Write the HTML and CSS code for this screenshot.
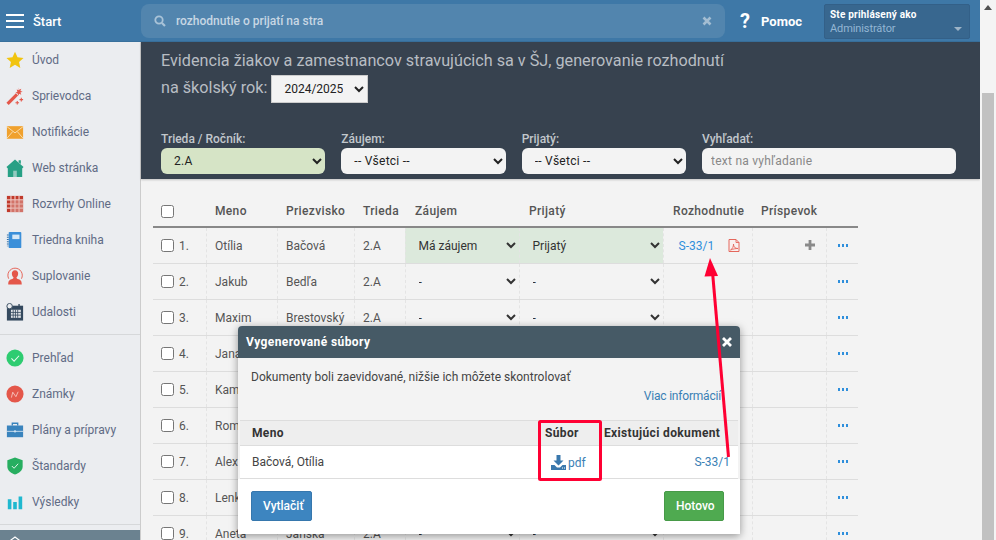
FILE: index.html
```html
<!DOCTYPE html>
<html lang="sk">
<head>
<meta charset="utf-8">
<title>Evidencia žiakov</title>
<link rel="stylesheet" href="styles.css">
</head>
<body>
<div class="page">
  <div class="app">
    <header class="topbar">
      <div class="brand">
        <svg class="burger" width="18" height="14" viewBox="0 0 18 14"><path d="M0 1h18M0 7h18M0 13h18" stroke="#fff" stroke-width="2" fill="none"/></svg>
        <span class="brand-text">Štart</span>
      </div>
      <div class="search">
        <svg class="search-icon" width="12" height="12" viewBox="0 0 12 12"><circle cx="5" cy="5" r="3.7" fill="none" stroke="#a9c3d8" stroke-width="1.8"/><path d="M8 8l3 3" stroke="#a9c3d8" stroke-width="2.2"/></svg>
        <span class="search-text">rozhodnutie o prijatí na stra</span>
        <svg class="search-clear" width="10" height="10" viewBox="0 0 10 10"><path d="M1.5 1.5l7 7M8.5 1.5l-7 7" stroke="#a3bdd2" stroke-width="2.6"/></svg>
      </div>
      <div class="help"><span class="help-mark">?</span><span class="help-text">Pomoc</span></div>
      <div class="user">
        <div class="user-top">Ste prihlásený ako</div>
        <div class="user-role"><span>Administrátor</span><i class="user-caret"></i></div>
      </div>
    </header>
    <div class="content">
      <nav class="sidebar">
        <ul class="menu">
          <li class="menu-item"><svg class="mi" viewBox="0 0 20 20"><path d="M10 .8l2.8 6.2 6.7.7-5 4.5 1.4 6.6-5.9-3.4-5.9 3.4 1.4-6.6-5-4.5 6.7-.7z" fill="#f1c40f"/></svg>Úvod</li>
          <li class="menu-item"><svg class="mi" viewBox="0 0 20 20"><path d="M.5 17.500L11 7l2.500 2.500L3 20z" fill="#e4574a"/><path d="M14 .5l.7 2.500 2.300-1-1 2.500 2.500.8-2.500.8 1 2.400-2.400-1-.8 2.300-.9-2.700-2.400-.6 2.200-1.200-.8-2.600 2.400 1z" fill="#e4574a"/><path d="M17 12v4M15 14h4M12.500 15.500v4M10.500 17.500h4" stroke="#e4574a" stroke-width="1.200"/></svg>Sprievodca</li>
          <li class="menu-item"><svg class="mi" viewBox="0 0 20 20"><path d="M1 3.500h18v14H1z" fill="#f0a12d"/><path d="M1 4l9 7 9-7M1 17l6.500-7.500M19 17l-6.500-7.500" fill="none" stroke="#fbe1b3" stroke-width="1"/></svg>Notifikácie</li>
          <li class="menu-item"><svg class="mi" viewBox="0 0 20 20"><path d="M10 .5L19.500 9 18 10.500V20H2V10.500L.5 9zM14 1.500h2.500v4L14 3.500z" fill="#27a085"/><path d="M8 13h4v7H8z" fill="#ebedf0" opacity=".55"/></svg>Web stránka</li>
          <li class="menu-item"><svg class="mi" viewBox="0 0 20 20"><rect x="1" y="1" width="18" height="18" fill="#c0392b"/><path d="M5.500 1v18M10 1v18M14.500 1v18M1 5.500h18M1 10h18M1 14.500h18" stroke="#f0c9c4" stroke-width="1.300"/><rect x="6" y="6" width="13" height="13" fill="#e0a49d" opacity=".55"/></svg>Rozvrhy Online</li>
          <li class="menu-item"><svg class="mi" viewBox="0 0 20 20"><rect x="3" y="1" width="14" height="18" rx="1" fill="#3b8fd9"/><rect x="7" y="4" width="8" height="5" fill="#d6e8f7"/><path d="M2 4v13" stroke="#2f6fa8" stroke-width="2" stroke-dasharray="1 1.500"/></svg>Triedna kniha</li>
          <li class="menu-item"><svg class="mi" viewBox="0 0 20 20"><path d="M3 13A8 8 0 1 1 17.200 13" fill="none" stroke="#e4574a" stroke-width="1"/><path d="M10 3.500c2.500 0 3.700 2 3.500 4.200-.2 2-1.200 3.300-1.900 4 0 1 .8 1.500 2.400 2 2 .7 3.500 1.500 3.500 5.800H2.500c0-4.300 1.500-5.100 3.500-5.800 1.600-.5 2.400-1 2.400-2-.7-.7-1.700-2-1.900-4C6.300 5.500 7.500 3.500 10 3.500z" fill="#e4574a"/></svg>Suplovanie</li>
          <li class="menu-item"><svg class="mi" viewBox="0 0 20 20"><rect x="1" y="3" width="18" height="16.500" fill="#34495e"/><path d="M5.500 7.500h11v9h-11z" fill="#dfe3e7"/><path d="M8 7.500v9M10.500 7.500v9M13 7.500v9M5.500 10.500h11M5.500 13.500h11" stroke="#34495e" stroke-width=".9"/><circle cx="4" cy="3.500" r="3" fill="#ebedf0" stroke="#34495e" stroke-width="1"/><path d="M14.500 1v4" stroke="#34495e" stroke-width="1.500"/></svg>Udalosti</li>
        </ul>
        <hr class="menu-rule">
        <ul class="menu">
          <li class="menu-item"><svg class="mi" viewBox="0 0 20 20"><circle cx="10" cy="10" r="9.500" fill="#2ecc71"/><path d="M6 10.500l3 3 5.500-6" fill="none" stroke="#e8f8ef" stroke-width="1.200"/></svg>Prehľad</li>
          <li class="menu-item"><svg class="mi" viewBox="0 0 20 20"><circle cx="10" cy="10" r="9.500" fill="#e4574a"/><path d="M6 14l1.500-6 3.500 5 2.500-5.500" fill="none" stroke="#f5c6c1" stroke-width="1"/></svg>Známky</li>
          <li class="menu-item"><svg class="mi" viewBox="0 0 20 20"><rect x="1" y="5" width="18" height="13" fill="#3a84bd"/><path d="M7 5V2.500h6V5" fill="none" stroke="#3a84bd" stroke-width="1.500"/><path d="M1 11.500h18" stroke="#cfe2f1" stroke-width="1"/><circle cx="10" cy="11.500" r="1.300" fill="#cfe2f1"/></svg>Plány a prípravy</li>
          <li class="menu-item"><svg class="mi" viewBox="0 0 20 20"><path d="M10 .5l8.500 3v7c0 4.500-4 7.500-8.500 9-4.500-1.500-8.500-4.500-8.500-9v-7z" fill="#27ae60"/><path d="M6.500 10l2.500 2.500 4.500-5" fill="none" stroke="#dff5e7" stroke-width="1.100"/></svg>Štandardy</li>
          <li class="menu-item"><svg class="mi" viewBox="0 0 20 20"><path d="M2 7h4v11H2zM8 10h4v8H8zM14 4h4v14h-4z" fill="#1fb8cf"/></svg>Výsledky</li>
        </ul>
        <hr class="menu-rule menu-rule-last">
        <div class="side-foot"><svg width="18" height="10" viewBox="0 0 18 10"><path d="M1 8l8-6 8 6" fill="none" stroke="#fff" stroke-width="1.200"/></svg></div>
      </nav>
      <main class="main">
        <section class="panel">
          <h1 class="panel-title">Evidencia žiakov a zamestnancov stravujúcich sa v ŠJ, generovanie rozhodnutí<br>na školský rok: <select class="year"><option>2024/2025</option></select></h1>
          <div class="filters">
            <label class="field"><span class="field-label">Trieda / Ročník:</span><select class="ctl ctl-on"><option>2.A</option></select></label>
            <label class="field"><span class="field-label">Záujem:</span><select class="ctl"><option>-- Všetci --</option></select></label>
            <label class="field"><span class="field-label">Prijatý:</span><select class="ctl"><option>-- Všetci --</option></select></label>
            <label class="field"><span class="field-label">Vyhľadať:</span><input class="ctl ctl-text" placeholder="text na vyhľadanie"></label>
          </div>
        </section>
        <table class="grid">
          <colgroup><col class="c1"><col class="c2"><col class="c3"><col class="c4"><col class="c5"><col class="c6"><col class="c7"><col class="c8"><col class="c9"></colgroup>
          <thead><tr><th><input type="checkbox" class="chk"></th><th>Meno</th><th>Priezvisko</th><th>Trieda</th><th>Záujem</th><th>Prijatý</th><th>Rozhodnutie</th><th>Príspevok</th><th></th></tr></thead>
          <tbody>
            <tr><td><input type="checkbox" class="chk"><span class="num">1.</span></td><td>Otília</td><td>Bačová</td><td>2.A</td><td class="sel on"><select><option>Má záujem</option></select></td><td class="sel on"><select><option>Prijatý</option></select></td><td class="doc"><a class="doc-link">S-33/1</a><svg class="pdf" width="12" height="13" viewBox="0 0 12 13"><path d="M1 .5h7l3 3v9H1z" fill="#f9f0ef" stroke="#e4675c"/><path d="M8 .5v3h3M2.500 11c2-1 3-3.500 3-6 0 3 1.500 4.500 4.500 4.500-2.500 0-5 .5-7.500 1.500z" fill="none" stroke="#e4675c" stroke-width=".9"/></svg></td><td class="plus"><svg width="10" height="10" viewBox="0 0 10 10"><path d="M5 0v10M0 5h10" stroke="#8a8a8a" stroke-width="2.800"/></svg></td><td class="dots"><i></i></td></tr>
            <tr><td><input type="checkbox" class="chk"><span class="num">2.</span></td><td>Jakub</td><td>Bedľa</td><td>2.A</td><td class="sel"><select><option>-</option></select></td><td class="sel"><select><option>-</option></select></td><td></td><td></td><td class="dots"><i></i></td></tr>
            <tr><td><input type="checkbox" class="chk"><span class="num">3.</span></td><td>Maxim</td><td>Brestovský</td><td>2.A</td><td class="sel"><select><option>-</option></select></td><td class="sel"><select><option>-</option></select></td><td></td><td></td><td class="dots"><i></i></td></tr>
            <tr><td><input type="checkbox" class="chk"><span class="num">4.</span></td><td>Jana</td><td>Čierna</td><td>2.A</td><td class="sel"><select><option>-</option></select></td><td class="sel"><select><option>-</option></select></td><td></td><td></td><td class="dots"><i></i></td></tr>
            <tr><td><input type="checkbox" class="chk"><span class="num">5.</span></td><td>Kamil</td><td>Dubec</td><td>2.A</td><td class="sel"><select><option>-</option></select></td><td class="sel"><select><option>-</option></select></td><td></td><td></td><td class="dots"><i></i></td></tr>
            <tr><td><input type="checkbox" class="chk"><span class="num">6.</span></td><td>Roman</td><td>Fabian</td><td>2.A</td><td class="sel"><select><option>-</option></select></td><td class="sel"><select><option>-</option></select></td><td></td><td></td><td class="dots"><i></i></td></tr>
            <tr><td><input type="checkbox" class="chk"><span class="num">7.</span></td><td>Alex</td><td>Hudec</td><td>2.A</td><td class="sel"><select><option>-</option></select></td><td class="sel"><select><option>-</option></select></td><td></td><td></td><td class="dots"><i></i></td></tr>
            <tr><td><input type="checkbox" class="chk"><span class="num">8.</span></td><td>Lenka</td><td>Horná</td><td>2.A</td><td class="sel"><select><option>-</option></select></td><td class="sel"><select><option>-</option></select></td><td></td><td></td><td class="dots"><i></i></td></tr>
            <tr><td><input type="checkbox" class="chk"><span class="num">9.</span></td><td>Aneta</td><td>Janská</td><td>2.A</td><td class="sel"><select><option>-</option></select></td><td class="sel"><select><option>-</option></select></td><td></td><td></td><td class="dots"><i></i></td></tr>
          </tbody>
        </table>
      </main>
    </div>
  </div>
  <div class="scrollbar"><i class="scroll-up"></i><div class="scroll-thumb"></div></div>

  <div class="modal">
    <div class="modal-head"><span>Vygenerované súbory</span><svg width="10" height="10" viewBox="0 0 10 10"><path d="M1 1l8 8M9 1l-8 8" stroke="#fff" stroke-width="2.800"/></svg></div>
    <div class="modal-body">
      <p class="modal-text">Dokumenty boli zaevidované, nižšie ich môžete skontrolovať</p>
      <p class="modal-more"><a>Viac informácií</a></p>
    </div>
    <table class="files">
      <colgroup><col class="f1"><col class="f2"><col class="f3"></colgroup>
      <thead><tr><th>Meno</th><th>Súbor</th><th>Existujúci dokument</th></tr></thead>
      <tbody><tr><td>Bačová, Otília</td><td class="file"><svg width="15" height="15" viewBox="0 0 15 15"><path d="M5.500 0h4v5.500H12.500L7.500 10.500 2.500 5.500h3z" fill="#3a78ad"/><path d="M0 10h3.500l2.500 2.500h3L11.500 10H15v5H0z" fill="#3a78ad"/><path d="M11 13h1M13 13h1" stroke="#fff"/></svg><a>pdf</a></td><td class="existing"><a>S-33/1</a></td></tr></tbody>
    </table>
    <div class="modal-foot"><button class="btn btn-blue">Vytlačiť</button><button class="btn btn-green">Hotovo</button></div>
  </div>

  <svg class="overlay" width="996" height="540" viewBox="0 0 996 540">
    <rect x="539.500" y="421.500" width="61" height="58" rx="1" fill="none" stroke="#ff0033" stroke-width="3"/>
    <path d="M728.500 457L712.500 272" fill="none" stroke="#ff0033" stroke-width="3"/>
    <path d="M710 258l8 18-13.500 .5z" fill="#ff0033"/>
  </svg>
</div>
</body>
</html>
```

FILE: styles.css
```css
* { box-sizing: border-box; }
html, body { margin: 0; padding: 0; height: 100%; overflow: hidden; }
body { font-family: Roboto, "Liberation Sans", sans-serif; font-size: 12px; color: #555; background: #f3f3f3; }
a { color: #3a7fb5; text-decoration: none; }

.page { position: relative; display: flex; width: 996px; height: 540px; overflow: hidden; }
.app { flex: 1; min-width: 0; display: flex; flex-direction: column; }

.topbar { flex: none; height: 42px; display: flex; align-items: center; background: #3e78a7; box-shadow: inset 0 -1px 0 #38709c; }
.brand { width: 141px; flex: none; display: flex; align-items: center; padding-left: 6px; color: #fff; }
.burger { flex: none; }
.brand-text { margin-left: 9px; font-size: 13px; font-weight: 500; }
.search { width: 584px; flex: none; height: 34px; display: flex; align-items: center; padding: 0 13px 0 13px; background: #5285ae; border-radius: 8px; }
.search-icon { flex: none; }
.search-text { flex: 1; margin-left: 10px; color: #c7d7e4; font-size: 12px; font-weight: 500; }
.search-clear { flex: none; }
.help { display: flex; align-items: center; margin-left: 15px; color: #fff; font-weight: 700; }
.help-mark { font-size: 20px; width: 21px; }
.help-text { font-size: 13px; }
.user { margin-left: 22px; width: 146px; height: 35px; padding: 4px 5px; background: #38678f; border: 1px solid #336088; border-radius: 2px; }
.user-top { color: #fff; font-size: 10px; font-weight: 700; line-height: 12px; letter-spacing: .2px; }
.user-role { display: flex; align-items: center; justify-content: space-between; color: #93b6d4; font-size: 11px; line-height: 16px; letter-spacing: -.1px; }
.user-caret { width: 0; height: 0; margin-right: 2px; border-left: 4px solid transparent; border-right: 4px solid transparent; border-top: 4px solid #9db4c7; }

.content { flex: 1; min-height: 0; display: flex; }
.sidebar { flex: none; width: 141px; display: flex; flex-direction: column; background: #ebedf0; border-right: 1px solid #ccc; }
.menu { list-style: none; margin: 0; padding: 0; }
.menu-item { height: 36px; display: flex; align-items: center; padding-left: 6px; color: #5f6b85; font-size: 12px; }
.mi { width: 18px; height: 18px; flex: none; margin-right: 8px; }
.menu-rule { width: 100%; margin: 4px 0 5px; border: 0; border-top: 1px solid #d6d8da; }
.menu-rule-last { margin-bottom: 5px; }
.side-foot { flex: 1; display: flex; justify-content: flex-start; padding: 5px 0 0 6px; background: #6b8290; }

.main { flex: 1; min-width: 0; background: #f3f3f3; }
.panel { height: 137px; padding: 5px 20px 0; background: #37424f; box-shadow: 0 1px 2px rgba(0,0,0,.2); }
.panel-title { margin: 0; height: 60px; color: #b8bdc3; font-size: 16.2px; font-weight: 400; line-height: 27px; }
.year { width: 97px; height: 28px; margin-left: 0; padding: 0 8px; background: #f3f3f3; color: #222; border: 1px solid #ccc; border-radius: 0; font: 12px Roboto, sans-serif; vertical-align: middle; }
.filters { display: grid; grid-template-columns: 1fr 1fr 1fr 254px; column-gap: 16px; margin: 25px 4px 0 0; }
.field { display: flex; flex-direction: column; }
.field-label { color: #c2c7cc; font-size: 12px; font-weight: 500; line-height: 14px; margin-bottom: 2px; }
.ctl { height: 26px; width: 100%; padding: 0 9px; background: #f3f3f3; color: #222; border: 0; border-radius: 6px; font: 12px Roboto, sans-serif; letter-spacing: .25px; }
.ctl-on { background: #d6e4c6; }
.ctl-text { color: #333; }
.ctl-text::placeholder { color: #888; }

.grid { width: 705px; margin: 14px 0 0 12px; border-collapse: collapse; table-layout: fixed; }
.c1 { width: 53px; } .c2 { width: 71px; } .c3 { width: 77px; } .c4 { width: 51px; } .c5 { width: 114px; } .c6 { width: 144px; } .c7 { width: 89px; } .c8 { width: 74px; } .c9 { width: 32px; }
.grid th { height: 34px; padding: 2px 0 0 9px; text-align: left; font-weight: 500; font-size: 12px; color: #555; letter-spacing: .35px; border-bottom: 2px solid #888; }
.grid th:nth-child(n+5):nth-child(-n+7) { padding-left: 10px; }
.grid td { height: 36px; padding: 0 0 0 8.5px; color: #555; border-bottom: 1px solid #ddd; border-left: 1px dashed #e4e4e4; white-space: nowrap; }
.grid th:first-child, .grid td:first-child { border-left: 0; padding-left: 8px; }
.chk { width: 13px; height: 13px; margin: 0; vertical-align: middle; }
.num { margin-left: 5px; vertical-align: middle; }
.grid td.sel { padding: 0; }
.grid td.on { background: #dce9dc; }
.sel select { width: 100%; height: 35px; padding: 0 0 0 9px; background: transparent; border: 0; color: #333; font: 12px Roboto, sans-serif; }
.grid td.doc { padding-left: 15px; }
.doc-link { color: #2f8fdc; }
.pdf { margin-left: 14px; vertical-align: -2px; }
.grid td.plus { text-align: right; padding-right: 11px; }
.grid td.dots { padding-left: 11px; }
.dots i { display: block; width: 10px; height: 3px; background: repeating-linear-gradient(90deg, #2f8fdc 0 2px, transparent 2px 4px); }

.scrollbar { flex: none; position: relative; width: 16px; background: #f4f4f4; }
.scroll-up { position: absolute; left: 4px; top: 5px; width: 0; height: 0; border-left: 4px solid transparent; border-right: 4px solid transparent; border-bottom: 5px solid #505050; }
.scroll-thumb { position: absolute; left: 2px; right: 2px; top: 93px; bottom: 0; background: #c1c1c1; }

.modal { position: absolute; left: 238px; top: 326px; width: 502px; height: 208px; display: flex; flex-direction: column; background: #f3f3f3; border-radius: 4px 4px 0 0; box-shadow: 0 2px 8px rgba(0,0,0,.4); overflow: hidden; }
.modal-head { flex: none; height: 32px; display: flex; align-items: center; justify-content: space-between; padding: 0 8px 0 8px; background: #465a66; color: #fff; font-weight: 700; font-size: 12px; letter-spacing: .4px; }
.modal-body { flex: none; height: 62px; padding: 0 13px; }
.modal-text { margin: 12px 0 0; color: #444; }
.modal-more { margin: 5px 6px 0 0; text-align: right; letter-spacing: -.2px; }
.files { flex: none; width: 498px; margin: 0 2px; border-collapse: collapse; table-layout: fixed; }
.f1 { width: 298px; } .f2 { width: 64px; } .f3 { width: 136px; }
.files th { height: 25px; padding: 0 0 0 12px; text-align: left; background: #eee; border-top: 1px solid #ddd; border-bottom: 1px solid #ddd; color: #333; font-weight: 700; font-size: 12px; letter-spacing: .35px; }
.files th:nth-child(2) { padding-left: 7px; }
.files th:nth-child(3) { padding-left: 2px; }
.files td { height: 33px; padding: 0 0 0 12px; background: #fff; border-bottom: 1px solid #ddd; color: #444; }
.files td.file { padding-left: 13px; }
.file svg { vertical-align: -3px; margin-right: 2px; }
.files td.existing { padding: 0 8px 0 0; text-align: right; }
.modal-foot { flex: 1; display: flex; justify-content: space-between; align-items: flex-start; padding: 12px 16px 0 13px; background: #fff; }
.btn { height: 30px; padding: 0 11px; border: 1px solid transparent; border-radius: 2px; color: #fff; font: 500 12px Roboto, sans-serif; }
.btn-blue { width: 61px; background: #3d85c0; border-color: #3677ad; }
.btn-green { width: 60px; background: #4faa50; border-color: #479a48; }

.overlay { position: absolute; left: 0; top: 0; pointer-events: none; }
```
